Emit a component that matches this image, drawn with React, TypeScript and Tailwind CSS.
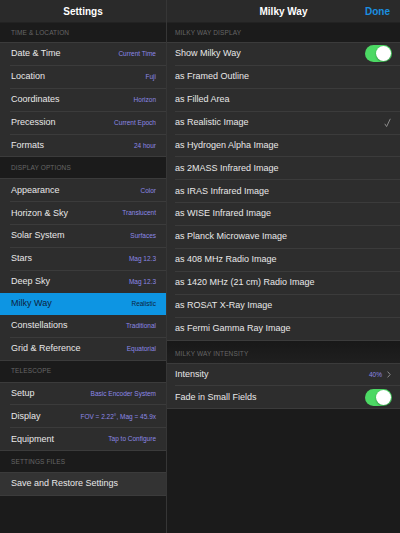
import React from "react";

type Row = { label: string; detail?: string; selected?: boolean };

const leftSections: { title: string; rows: Row[] }[] = [
  {
    title: "Time & Location",
    rows: [
      { label: "Date & Time", detail: "Current Time" },
      { label: "Location", detail: "Fuji" },
      { label: "Coordinates", detail: "Horizon" },
      { label: "Precession", detail: "Current Epoch" },
      { label: "Formats", detail: "24 hour" },
    ],
  },
  {
    title: "Display Options",
    rows: [
      { label: "Appearance", detail: "Color" },
      { label: "Horizon & Sky", detail: "Translucent" },
      { label: "Solar System", detail: "Surfaces" },
      { label: "Stars", detail: "Mag 12.3" },
      { label: "Deep Sky", detail: "Mag 12.3" },
      { label: "Milky Way", detail: "Realistic", selected: true },
      { label: "Constellations", detail: "Traditional" },
      { label: "Grid & Reference", detail: "Equatorial" },
    ],
  },
  {
    title: "Telescope",
    rows: [
      { label: "Setup", detail: "Basic Encoder System" },
      { label: "Display", detail: "FOV = 2.22°, Mag = 45.9x" },
      { label: "Equipment", detail: "Tap to Configure" },
    ],
  },
  {
    title: "Settings Files",
    rows: [{ label: "Save and Restore Settings" }],
  },
];

const displayModes = [
  "as Framed Outline",
  "as Filled Area",
  "as Realistic Image",
  "as Hydrogen Alpha Image",
  "as 2MASS Infrared Image",
  "as IRAS Infrared Image",
  "as WISE Infrared Image",
  "as Planck Microwave Image",
  "as 408 MHz Radio Image",
  "as 1420 MHz (21 cm) Radio Image",
  "as ROSAT X-Ray Image",
  "as Fermi Gamma Ray Image",
];

function Toggle() {
  return (
    <div className="w-[27px] h-[17px] rounded-full bg-[#4cd964] flex items-center justify-end pr-[1px]">
      <div className="w-[15px] h-[15px] rounded-full bg-white shadow-[0_1px_2px_rgba(0,0,0,0.35)]" />
    </div>
  );
}

function SectionHeader({ title, first }: { title: string; first?: boolean }) {
  return (
    <div
      className={`${first ? "h-[19px]" : "h-[21px]"} flex items-center pl-[11px] text-[6.5px] uppercase tracking-[0.02em] text-[#666]`}
    >
      {title}
    </div>
  );
}

function Divider({ inset }: { inset: string }) {
  return <div className={`h-px bg-[#3b3b3b] ${inset}`} />;
}

export default function App() {
  return (
    <div
      className="w-[400px] h-[533px] flex bg-[#1b1b1b] overflow-hidden text-[#e8e8e8]"
      style={{ fontFamily: '"Liberation Sans", Arial, sans-serif' }}
    >
      {/* Master */}
      <div className="w-[167px] shrink-0 flex flex-col border-r border-[#363636]">
        <div className="h-[23px] shrink-0 flex items-center justify-center bg-[#2a2a2a] border-b border-[#222] text-[10px] font-bold text-white">
          Settings
        </div>
        {leftSections.map((section, si) => (
          <div key={section.title}>
            <SectionHeader title={section.title} first={si === 0} />
            <div className="bg-[#2d2d2d] border-y border-[#3b3b3b]">
              {section.rows.map((row, ri) => (
                <div key={row.label}>
                  {ri > 0 && !row.selected && !section.rows[ri - 1].selected && <Divider inset="ml-[10px]" />}
                  <div
                    className={`h-[21.9px] flex items-center justify-between pl-[11px] pr-[10px] ${
                      row.selected ? "bg-[#0d95e3]" : section.rows.length === 1 ? "bg-[#333]" : ""
                    }`}
                  >
                    <span className={`text-[9px] ${row.selected ? "text-[#0c2340]" : ""}`}>{row.label}</span>
                    {row.detail && (
                      <span className={`text-[6.5px] ${row.selected ? "text-[#0c2340]" : "text-[#8c88e6]"}`}>
                        {row.detail}
                      </span>
                    )}
                  </div>
                </div>
              ))}
            </div>
          </div>
        ))}
      </div>

      {/* Detail */}
      <div className="flex-1 flex flex-col">
        <div className="h-[23px] shrink-0 grid grid-cols-[1fr_auto_1fr] items-center bg-[#2a2a2a] border-b border-[#222] px-[10px]">
          <span />
          <span className="text-[10px] font-bold text-white">Milky Way</span>
          <span className="text-right text-[10px] font-bold text-[#1a8fe0]">Done</span>
        </div>
        <div className="h-[19px] flex items-center pl-[8px] text-[6.5px] uppercase tracking-[0.02em] text-[#666]">
          Milky Way Display
        </div>
        <div className="bg-[#2d2d2d] border-y border-[#3b3b3b]">
          <div className="h-[21.9px] flex items-center justify-between pl-[8px] pr-[8px]">
            <span className="text-[9px]">Show Milky Way</span>
            <Toggle />
          </div>
          {displayModes.map((mode) => (
            <div key={mode}>
              <Divider inset="ml-[8px]" />
              <div className="h-[21.9px] flex items-center justify-between pl-[8px] pr-[9px]">
                <span className="text-[9px]">{mode}</span>
                {mode === "as Realistic Image" && (
                  <svg width="7" height="10" viewBox="0 0 7 10" fill="none">
                    <path d="M0.8 5.8 L2.6 8.6 L6.3 0.8" stroke="#8a8a8a" strokeWidth="1" />
                  </svg>
                )}
              </div>
            </div>
          ))}
        </div>
        <div className="h-[22px] flex items-end pb-[4px] pl-[8px] text-[6.5px] uppercase tracking-[0.02em] text-[#666] bg-gradient-to-b from-[#181818] to-[#1f1f1f]">
          Milky Way Intensity
        </div>
        <div className="bg-[#2d2d2d] border-y border-[#3b3b3b]">
          <div className="h-[21.9px] flex items-center justify-between pl-[8px] pr-[9px]">
            <span className="text-[9px]">Intensity</span>
            <span className="flex items-center gap-[5px]">
              <span className="text-[6.5px] text-[#8c88e6]">40%</span>
              <svg width="4" height="7" viewBox="0 0 4 7" fill="none">
                <path d="M0.6 0.6 L3.2 3.5 L0.6 6.4" stroke="#8a8a8a" strokeWidth="1" />
              </svg>
            </span>
          </div>
          <Divider inset="ml-[8px]" />
          <div className="h-[21.9px] flex items-center justify-between pl-[8px] pr-[8px]">
            <span className="text-[9px]">Fade in Small Fields</span>
            <Toggle />
          </div>
        </div>
      </div>
    </div>
  );
}
